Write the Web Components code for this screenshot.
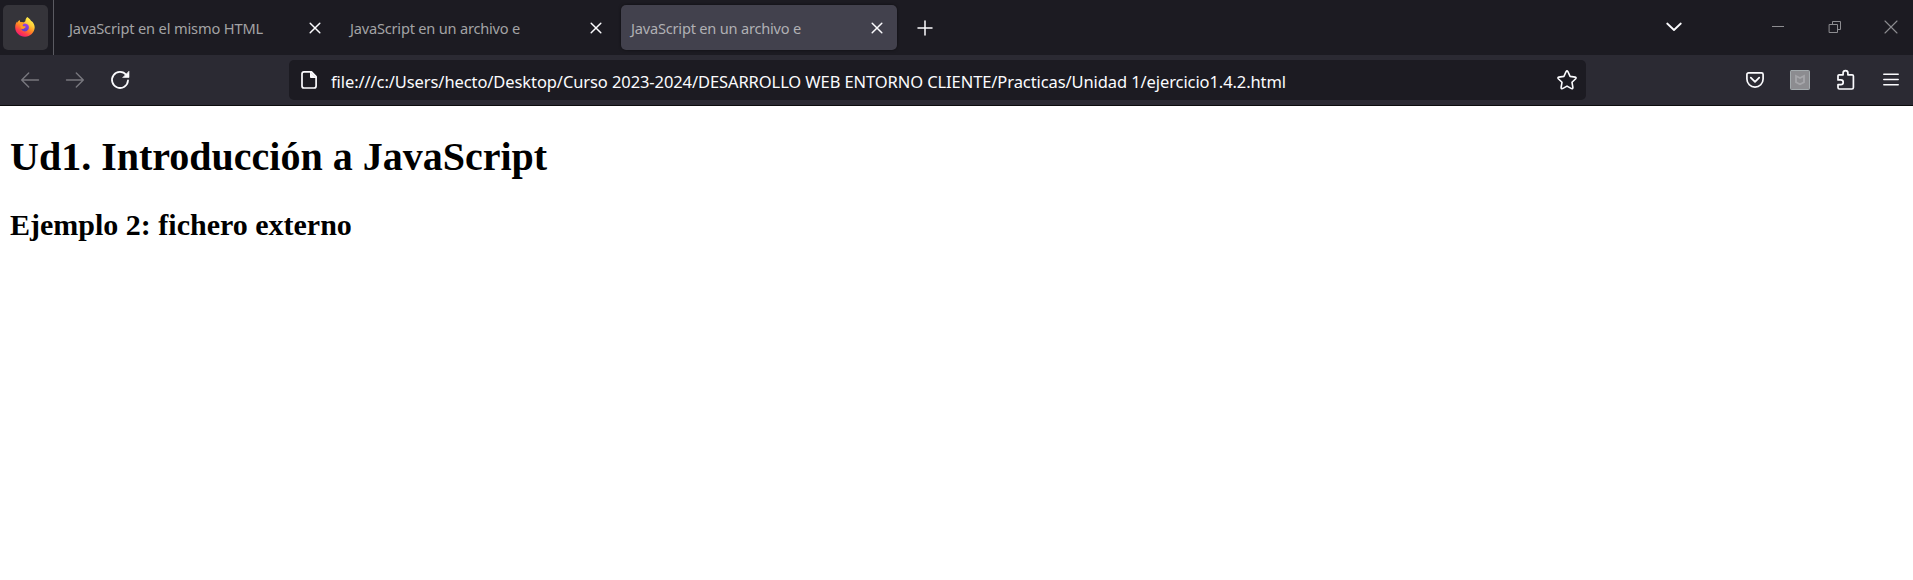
<!DOCTYPE html>
<html lang="es">
<head>
<meta charset="utf-8">
<title>JavaScript en un archivo externo</title>
<style>
html,body{margin:0;height:100%;background:#fff;overflow:hidden}
</style>
</head>
<body>
<browser-window></browser-window>
<script>
const define = (name, html, ready) => customElements.define(name, class extends HTMLElement {
  connectedCallback() {
    if (this.shadowRoot) return;
    this.attachShadow({ mode: 'open' }).innerHTML = html;
    if (ready) ready(this, this.shadowRoot);
  }
});

/* Icons: each drawing is [width, height, markup]. */
const icons = {
  close: [12, 12, '<path d="M1.2 1.2l9.6 9.6M10.8 1.2l-9.6 9.6" stroke-width="1.5"/>'],
  plus: [16, 16, '<path d="M8 1v14M1 8h14" stroke-width="1.5"/>'],
  chevron: [16, 10, '<path d="M1.2 1.5L8 8l6.8-6.5" stroke-width="1.8"/>'],
  minimize: [12, 12, '<path d="M0 5.5h12" stroke-width="1" stroke-linecap="butt"/>'],
  restore: [12, 12, '<path d="M.5 3.5h8v8h-8zM3.5 3.500V.5h8v8h-3" stroke-width="1" stroke-linejoin="miter"/>'],
  quit: [14, 14, '<path d="M1 1l12 12M13 1L1 13" stroke-width="1.1"/>'],
  back: [20, 18, '<path d="M18.500 9H2M8.700 2L1.700 9l7 7" stroke-width="1.4"/>'],
  forward: [20, 18, '<path d="M1.500 9H18M11.300 2l7 7-7 7" stroke-width="1.4"/>'],
  reload: [20, 20, '<path d="M16.300 5A8 8 0 1 0 18 10.500" stroke-width="1.8"/><path d="M19 1.500V7.500H13z" fill="currentColor" stroke-width=".6"/>'],
  page: [16, 18, '<path d="M3 .9h7.500L15.100 5.500V15a2 2 0 0 1-2 2H3a2 2 0 0 1-2-2V3A2.100 2.100 0 0 1 3 .9z" stroke-width="1.7"/><path d="M9.500 1v5.500H15z" fill="currentColor" stroke-width="1"/>'],
  star: [20, 20, '<path d="M9.100 1.600q.9-1.500 1.800 0l2.200 4.800 5.100.7q1.500.4.500 1.600l-3.700 3.600.9 5.200q0 1.500-1.400 1.100L10 16.100l-4.500 2.500q-1.400.4-1.400-1.100l.9-5.200L1.300 8.700q-1-1.200.5-1.600l5.100-.7z" stroke-width="1.600"/>'],
  pocket: [18, 16, '<path d="M2.500.9h13a1.600 1.600 0 0 1 1.600 1.600V7a8.100 8.100 0 0 1-16.200 0V2.500A1.600 1.600 0 0 1 2.500.9z" stroke-width="1.700"/><path d="M4.800 5.700L9 9.800l4.200-4.100" stroke-width="1.800"/>'],
  shield: [20, 20, '<rect x=".5" y=".5" width="19" height="19" rx=".8" fill="#8c8c90" stroke="#a4abae" stroke-width="1"/><path d="M6 6l4 2 4-2v6.200l-4 2-4-2z" fill="none" stroke="#a6a6aa" stroke-width="1.800" stroke-linejoin="miter"/>'],
  puzzle: [18, 20, '<path d="M1 7V5.800Q1 4.800 2 4.800H6.100V3a2.400 2.400 0 0 1 4.800 0V4.800H15.100q1.300 0 1.300 1.300V17.500q0 1.500-1.500 1.500H2.500Q1 19 1 17.500V14.700H3.800a2.300 2.300 0 0 0 0-4.800H1z" stroke-width="1.700"/>'],
  menu: [16, 13, '<path d="M.8 1.200h14.400M.8 6.500h14.400M.8 11.800h14.400" stroke-width="1.500"/>'],
  firefox: [20, 20, `<defs>
    <linearGradient id="f" x1=".85" y1=".05" x2=".3" y2="1"><stop offset="0" stop-color="#fff44f"/><stop offset=".3" stop-color="#ffd03a"/><stop offset=".55" stop-color="#ff8a22"/><stop offset=".8" stop-color="#ff3b4e"/><stop offset="1" stop-color="#ee1875"/></linearGradient>
    <linearGradient id="p" x1=".6" y1="0" x2=".4" y2="1"><stop offset="0" stop-color="#a040e6"/><stop offset="1" stop-color="#5a3fc8"/></linearGradient></defs>
    <g stroke="none"><path fill="url(#f)" d="M12.200 0c2 1.100 3.300 2.500 4 4.300l.3-.2c2 1.600 3.300 4 3.200 6.500-.2 5.100-4.400 9.100-9.700 9.100S.3 15.600.2 10.400C.1 8.100.900 5.900 2.100 4.500l.4 1.200C2.900 4.500 3.800 3.600 4.800 3c0 1.300.3 2.100 1.100 2.400l3 .2c.4-.7 1-1.100 1.500-1.300C10.300 2.800 11 1.200 12.200 0z"/>
    <path fill="url(#p)" d="M7.200 7.100c2.300-1.300 5.300-.7 6.300 1.300 1.300 2.800-.7 6-3.700 6-2 0-3.500-1.200-3.600-2.800.7.500 1.800.5 2.800-.2.900-.7 1.400-.9 1.500-1.500-.6-.5-2.400-.1-3-.8-.4-.4-.5-1.200-.3-2z"/>
    <path fill="#ff9a22" d="M4.800 5.300c2-.5 3.500-.1 4.500.9L7.700 8c-.3.900.2 1.500 1.400 1.500h1.700c-.3 1-1.400 1.200-2.200 1.900-.9.500-2 .4-2.800-.2z"/></g>`]
};
define('ui-icon', '<style>:host{display:block;flex:none}svg{display:block;overflow:visible}</style><slot></slot>', (host, root) => {
  const [w, h, art] = icons[host.getAttribute('name')];
  root.innerHTML += `<svg width="${w}" height="${h}" viewBox="0 0 ${w} ${h}" fill="none" stroke="currentColor" stroke-linecap="round" stroke-linejoin="round">${art}</svg>`;
});

/* A one-line label whose tracking is adjusted to span its "span" attribute. */
define('fit-label', '<style>:host{display:block;white-space:pre;flex:none}span{display:inline-block}</style><span><slot></slot></span>', (host, root) => {
  const s = root.querySelector('span');
  requestAnimationFrame(() => {
    s.style.letterSpacing = (host.getAttribute('span') - s.getBoundingClientRect().width) / host.textContent.length + 'px';
  });
});

define('browser-tab', `<style>
  :host{display:flex;align-items:center;box-sizing:border-box;width:276px;height:45px;padding:0 14px 0 10px;border-radius:5px;
    color:#a3a3a5;font:14.6px/20px "Noto Sans",sans-serif;flex:none}
  :host([active]){background:#42414d;color:#b0b0b4;box-shadow:0 0 3px #0008}
  ui-icon{margin-left:auto;color:#fbfbfe}
  slot{display:block}
</style><slot></slot><ui-icon name="close"></ui-icon>`);

define('pinned-tab', `<style>
  :host{display:flex;align-items:center;width:53px;height:55px;border-right:1px solid #5b5b62;flex:none}
  div{display:grid;place-items:center;width:45px;height:45px;margin:-1px 0 0 3px;border-radius:5px;background:#35343a}
  ui-icon{padding:0 1px 1px 0}
</style><div><ui-icon name="firefox"></ui-icon></div>`);

define('tab-strip', `<style>
  :host{display:flex;align-items:center;height:55px;background:#1c1b22;color:#fbfbfe}
  .tabs{display:flex;gap:5px;margin-left:5px}
  fit-label{padding-top:1px}
  .new{margin-left:20px}
  .win{display:flex;align-items:center;margin:-2px 15px 0 auto;color:#8d8d91}
  .all{margin-right:90px;color:#fbfbfe}
  .min{margin-right:45px}.res{margin-right:43px}
</style>
<pinned-tab></pinned-tab>
<div class="tabs">
  <browser-tab><fit-label span="194">JavaScript en el mismo HTML</fit-label></browser-tab>
  <browser-tab><fit-label span="170">JavaScript en un archivo e</fit-label></browser-tab>
  <browser-tab active><fit-label span="170">JavaScript en un archivo e</fit-label></browser-tab>
</div>
<ui-icon class="new" name="plus"></ui-icon>
<div class="win"><ui-icon class="all" name="chevron"></ui-icon><ui-icon class="min" name="minimize"></ui-icon><ui-icon class="res" name="restore"></ui-icon><ui-icon name="quit"></ui-icon></div>`);

define('address-bar', `<style>
  :host{display:flex;align-items:center;box-sizing:border-box;width:1297px;height:40px;padding:0 9px 0 12px;border-radius:5px;background:#1c1b22;
    color:#fbfbfe;font:16.500px/22px "Noto Sans",sans-serif}
  fit-label{margin:3px 0 0 14px}
  ui-icon:last-child{margin-left:auto}
</style><ui-icon name="page"></ui-icon><fit-label span="955">file:///c:/Users/hecto/Desktop/Curso 2023-2024/DESARROLLO WEB ENTORNO CLIENTE/Practicas/Unidad 1/ejercicio1.4.2.html</fit-label><ui-icon name="star"></ui-icon>`);

define('nav-toolbar', `<style>
  :host{display:flex;align-items:center;box-sizing:border-box;height:51px;padding:0 15px 0 20px;
    background:#2b2a33;border-bottom:1px solid #0c0c0d;color:#fbfbfe}
  .nav,.actions{display:flex;align-items:center}
  .nav{gap:25px;width:269px}
  .dim{color:#78777e}
  .actions{gap:26px;width:152px;margin-left:auto}
  .ext{margin-left:1px}
  .menu{margin:-2px 0 0 2px}
</style>
<div class="nav"><ui-icon class="dim" name="back"></ui-icon><ui-icon class="dim" name="forward"></ui-icon><ui-icon name="reload"></ui-icon></div>
<address-bar></address-bar>
<div class="actions"><ui-icon name="pocket"></ui-icon><ui-icon name="shield"></ui-icon><ui-icon class="ext" name="puzzle"></ui-icon><ui-icon class="menu" name="menu"></ui-icon></div>`);

define('page-content', `<style>
  :host{display:block;padding:28px 10px;background:#fff;color:#000;font-family:"Liberation Serif",serif}
  h1{margin:0;font-size:40px;line-height:46px}
  h2{margin:28px 0 0;font-size:30px;line-height:34px}
</style><h1>Ud1. Introducción a JavaScript</h1><h2>Ejemplo 2: fichero externo</h2>`);

define('browser-window', `<style>:host{display:block;width:1913px}</style>
<tab-strip></tab-strip><nav-toolbar></nav-toolbar><page-content></page-content>`);
</script>
</body>
</html>
